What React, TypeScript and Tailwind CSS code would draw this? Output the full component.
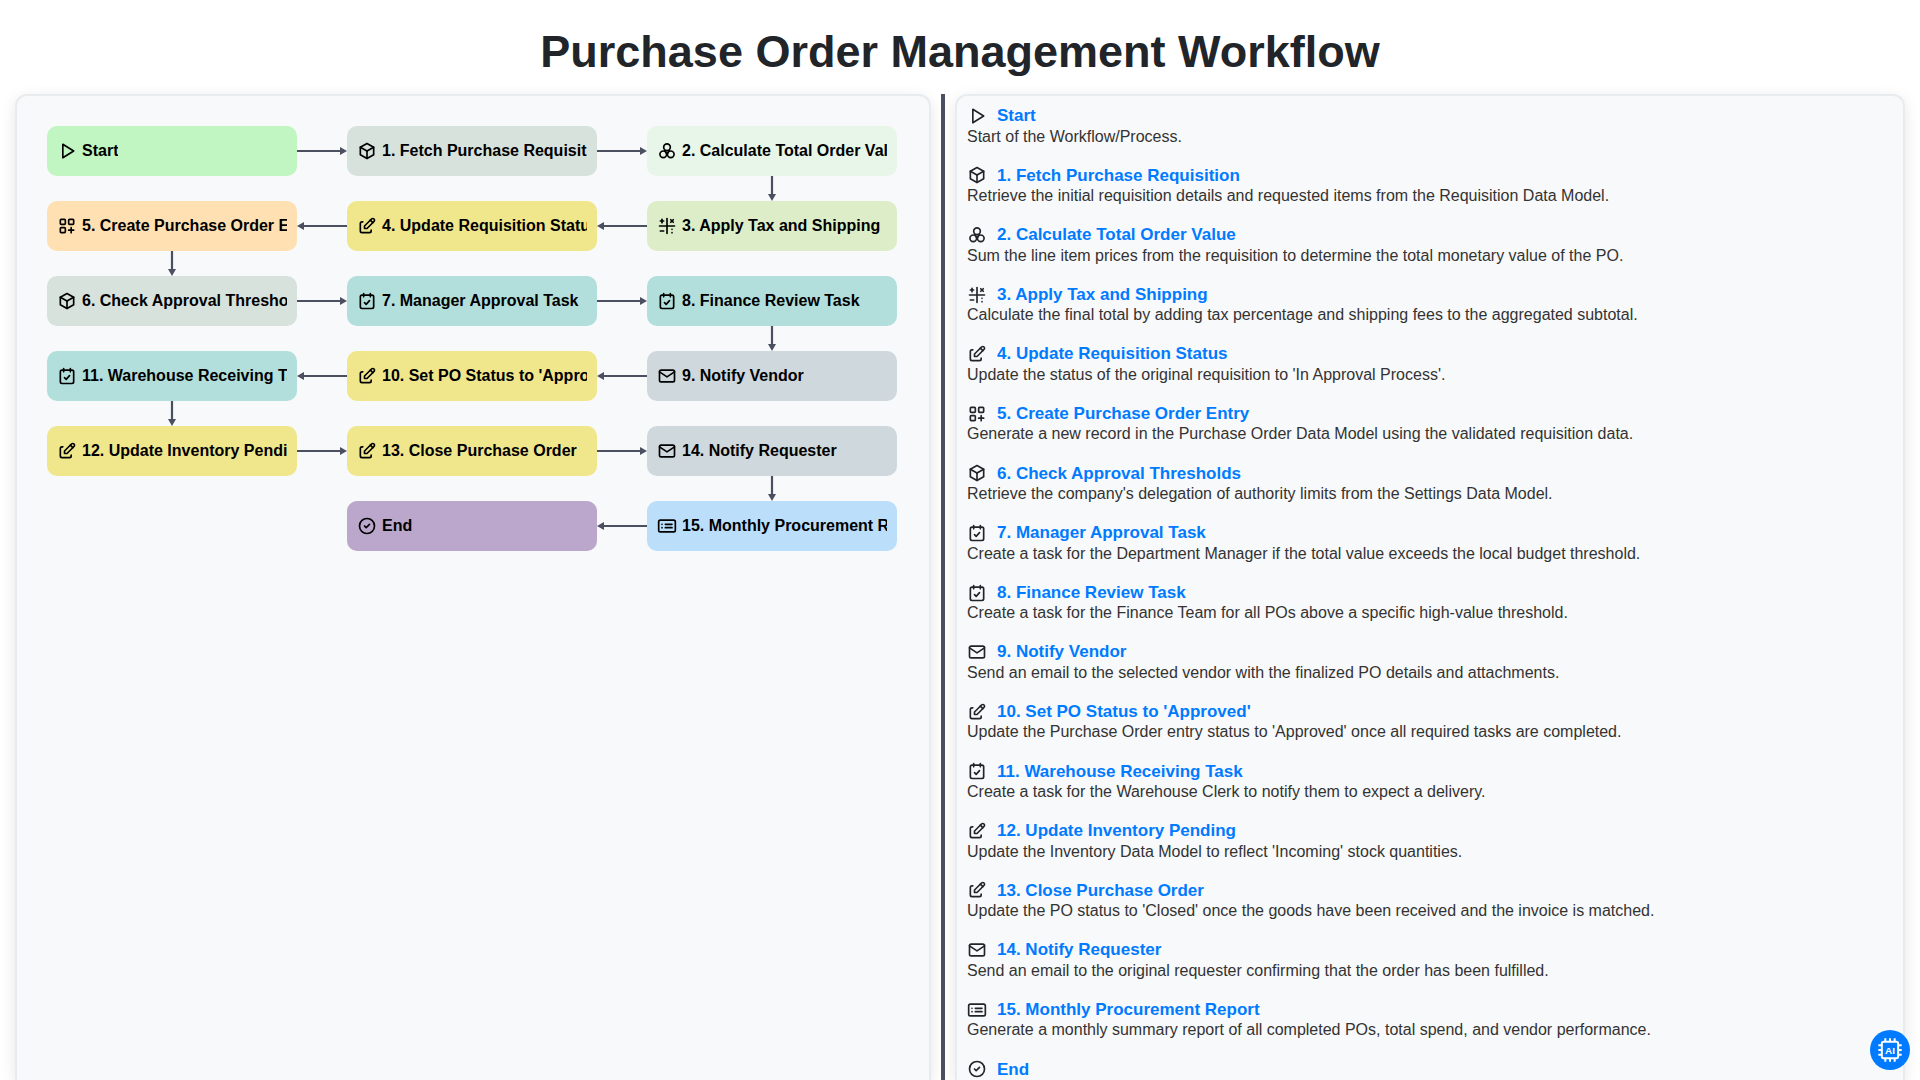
import React from "react";
import { TbPlayerPlay, TbBox, TbMathSymbols, TbEdit, TbMail, TbCircleCheck } from "react-icons/tb";

type IconC = React.ComponentType<{ className?: string }>;

const base = {
  viewBox: "0 0 24 24",
  fill: "none",
  stroke: "currentColor",
  strokeWidth: 2,
  strokeLinecap: "round" as const,
  strokeLinejoin: "round" as const,
};

const CalCheck: IconC = ({ className }) => (
  <svg {...base} className={className}>
    <rect x="4" y="5" width="16" height="16" rx="2" />
    <path d="M8 3v4M16 3v4M9 14l2 2l4 -4.5" />
  </svg>
);

const CardList: IconC = ({ className }) => (
  <svg {...base} className={className}>
    <rect x="2" y="5" width="20" height="14" rx="2" />
    <path d="M6 10h.01M6 14h.01M10 10h8M10 14h8" />
  </svg>
);

const Circles3: IconC = ({ className }) => (
  <svg {...base} className={className}>
    <circle cx="12" cy="7.5" r="4" />
    <circle cx="7.5" cy="16" r="4" />
    <circle cx="16.5" cy="16" r="4" />
    <path d="M9.5 11.5L12 16L14.5 11.5" />
  </svg>
);

const AppsPlus: IconC = ({ className }) => (
  <svg {...base} className={className}>
    <rect x="4" y="4" width="6" height="6" rx="1" />
    <rect x="14" y="4" width="6" height="6" rx="1" />
    <rect x="4" y="14" width="6" height="6" rx="1" />
    <path d="M14 17h6M17 14v6" />
  </svg>
);

type Dir = "r" | "l" | "d" | null;
const Y = "bg-[#f0e68c]";
const T = "bg-[#b2dfdb]";
const G = "bg-[#cfd8dc]";
const B = "bg-[#d8e2dc]";

const grid: { label: string; icon: IconC; bg: string; arrow: Dir }[] = [
  { label: "Start", icon: TbPlayerPlay, bg: "bg-[#c1f5c1]", arrow: "r" },
  { label: "1. Fetch Purchase Requisition", icon: TbBox, bg: B, arrow: "r" },
  { label: "2. Calculate Total Order Value", icon: Circles3, bg: "bg-[#e8f5e9]", arrow: "d" },
  { label: "5. Create Purchase Order Entry", icon: AppsPlus, bg: "bg-[#ffe0b2]", arrow: "d" },
  { label: "4. Update Requisition Status", icon: TbEdit, bg: Y, arrow: "l" },
  { label: "3. Apply Tax and Shipping", icon: TbMathSymbols, bg: "bg-[#dcedc8]", arrow: "l" },
  { label: "6. Check Approval Thresholds", icon: TbBox, bg: B, arrow: "r" },
  { label: "7. Manager Approval Task", icon: CalCheck, bg: T, arrow: "r" },
  { label: "8. Finance Review Task", icon: CalCheck, bg: T, arrow: "d" },
  { label: "11. Warehouse Receiving Task", icon: CalCheck, bg: T, arrow: "d" },
  { label: "10. Set PO Status to 'Approved'", icon: TbEdit, bg: Y, arrow: "l" },
  { label: "9. Notify Vendor", icon: TbMail, bg: G, arrow: "l" },
  { label: "12. Update Inventory Pending", icon: TbEdit, bg: Y, arrow: "r" },
  { label: "13. Close Purchase Order", icon: TbEdit, bg: Y, arrow: "r" },
  { label: "14. Notify Requester", icon: TbMail, bg: G, arrow: "d" },
];

const lastRow: { label: string; icon: IconC; bg: string; arrow: Dir }[] = [
  { label: "End", icon: TbCircleCheck, bg: "bg-[#bba6cc]", arrow: null },
  { label: "15. Monthly Procurement Report", icon: CardList, bg: "bg-[#bbdefb]", arrow: "l" },
];

const details: { t: string; d: string; icon: IconC }[] = [
  { t: "Start", d: "Start of the Workflow/Process.", icon: TbPlayerPlay },
  { t: "1. Fetch Purchase Requisition", d: "Retrieve the initial requisition details and requested items from the Requisition Data Model.", icon: TbBox },
  { t: "2. Calculate Total Order Value", d: "Sum the line item prices from the requisition to determine the total monetary value of the PO.", icon: Circles3 },
  { t: "3. Apply Tax and Shipping", d: "Calculate the final total by adding tax percentage and shipping fees to the aggregated subtotal.", icon: TbMathSymbols },
  { t: "4. Update Requisition Status", d: "Update the status of the original requisition to 'In Approval Process'.", icon: TbEdit },
  { t: "5. Create Purchase Order Entry", d: "Generate a new record in the Purchase Order Data Model using the validated requisition data.", icon: AppsPlus },
  { t: "6. Check Approval Thresholds", d: "Retrieve the company's delegation of authority limits from the Settings Data Model.", icon: TbBox },
  { t: "7. Manager Approval Task", d: "Create a task for the Department Manager if the total value exceeds the local budget threshold.", icon: CalCheck },
  { t: "8. Finance Review Task", d: "Create a task for the Finance Team for all POs above a specific high-value threshold.", icon: CalCheck },
  { t: "9. Notify Vendor", d: "Send an email to the selected vendor with the finalized PO details and attachments.", icon: TbMail },
  { t: "10. Set PO Status to 'Approved'", d: "Update the Purchase Order entry status to 'Approved' once all required tasks are completed.", icon: TbEdit },
  { t: "11. Warehouse Receiving Task", d: "Create a task for the Warehouse Clerk to notify them to expect a delivery.", icon: CalCheck },
  { t: "12. Update Inventory Pending", d: "Update the Inventory Data Model to reflect 'Incoming' stock quantities.", icon: TbEdit },
  { t: "13. Close Purchase Order", d: "Update the PO status to 'Closed' once the goods have been received and the invoice is matched.", icon: TbEdit },
  { t: "14. Notify Requester", d: "Send an email to the original requester confirming that the order has been fulfilled.", icon: TbMail },
  { t: "15. Monthly Procurement Report", d: "Generate a monthly summary report of all completed POs, total spend, and vendor performance.", icon: CardList },
  { t: "End", d: "End of the Workflow/Process.", icon: TbCircleCheck },
];

function Arrow({ dir }: { dir: Dir }) {
  if (dir === "r")
    return (
      <svg viewBox="0 0 50 12" className="absolute left-full top-1/2 -translate-y-1/2 w-[50px] h-[12px]">
        <path d="M0 6H44" stroke="#4a5060" strokeWidth="2.2" />
        <path d="M43 2L50 6L43 10Z" fill="#4a5060" />
      </svg>
    );
  if (dir === "l")
    return (
      <svg viewBox="0 0 50 12" className="absolute right-full top-1/2 -translate-y-1/2 w-[50px] h-[12px]">
        <path d="M6 6H50" stroke="#4a5060" strokeWidth="2.2" />
        <path d="M7 2L0 6L7 10Z" fill="#4a5060" />
      </svg>
    );
  if (dir === "d")
    return (
      <svg viewBox="0 0 12 25" className="absolute top-full left-1/2 -translate-x-1/2 w-[12px] h-[25px]">
        <path d="M6 0V19" stroke="#4a5060" strokeWidth="2.2" />
        <path d="M2 18L6 25L10 18Z" fill="#4a5060" />
      </svg>
    );
  return null;
}

function Node({ label, icon: Icon, bg, arrow }: { label: string; icon: IconC; bg: string; arrow: Dir }) {
  return (
    <div className={`relative h-[50px] rounded-[10px] ${bg}`}>
      <div className="h-full flex items-center px-[10px]">
        <Icon className="w-[20px] h-[20px] shrink-0 mr-[5px] text-black" />
        <span className="min-w-0 overflow-hidden whitespace-nowrap text-[16px] font-bold text-black">{label}</span>
      </div>
      <Arrow dir={arrow} />
    </div>
  );
}

export default function App() {
  return (
    <div className="h-screen overflow-hidden bg-white font-['Liberation_Sans',Arial,sans-serif] flex flex-col">
      <h1 className="text-center text-[45px] leading-[52px] font-bold text-[#212529] mt-[26px] mb-[16px] shrink-0">
        Purchase Order Management Workflow
      </h1>
      <div className="flex-1 min-h-0 flex px-[15px]">
        <div className="w-[916px] shrink-0 rounded-t-[12px] border-2 border-b-0 border-[#e9ecef] bg-[#f8f9fa] shadow-[0_4px_15px_rgba(0,0,0,0.1)] pt-[30px] pl-[30px]">
          <div className="grid grid-cols-[250px_250px_250px] gap-x-[50px] gap-y-[25px]">
            {grid.map((n) => (
              <Node key={n.label} {...n} />
            ))}
            <div />
            {lastRow.map((n) => (
              <Node key={n.label} {...n} />
            ))}
          </div>
        </div>
        <div className="w-[4px] shrink-0 mx-[10px] bg-[#4a5060]" />
        <div className="flex-1 min-w-0 rounded-t-[12px] border-2 border-b-0 border-[#e9ecef] bg-[#f8f9fa] shadow-[0_4px_15px_rgba(0,0,0,0.1)] pt-[9px] pl-[10px] overflow-hidden">
          {details.map((d) => (
            <div key={d.t} className="mb-[18.6px]">
              <div className="flex items-center h-[21.5px]">
                <d.icon className="w-[20px] h-[20px] shrink-0 mr-[10px] text-[#212529]" />
                <span className="text-[17px] font-bold text-[#007bff]">{d.t}</span>
              </div>
              <p className="pt-[1px] text-[16px] leading-[18.5px] text-[#333]">{d.d}</p>
            </div>
          ))}
        </div>
      </div>
      <button className="fixed right-[10px] bottom-[10px] w-[40px] h-[40px] rounded-full bg-[#007bff] flex items-center justify-center">
        <svg viewBox="0 0 24 24" className="w-[28px] h-[28px]" fill="none" stroke="#fff" strokeWidth="1.7">
          <rect x="5" y="5" width="14" height="14" rx="1.5" />
          <path d="M8 5V2M12 5V2M16 5V2M8 22v-3M12 22v-3M16 22v-3M5 8H2M5 12H2M5 16H2M22 8h-3M22 12h-3M22 16h-3" />
          <text x="12" y="15.2" textAnchor="middle" fontSize="8.5" fontWeight="700" fill="#fff" stroke="none" fontFamily="Liberation Sans">AI</text>
        </svg>
      </button>
    </div>
  );
}
